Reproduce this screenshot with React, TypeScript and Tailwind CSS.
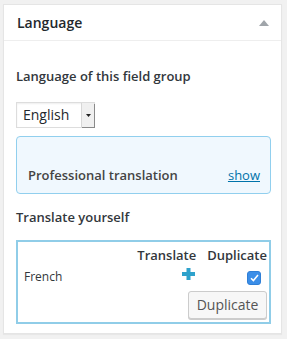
export default function App() {
  return (
    <div
      className="w-[287px] h-[339px] bg-[#f1f1f1] pt-[4px] pl-[3px]"
      style={{ fontFamily: '"Open Sans", "Noto Sans", sans-serif' }}
    >
      <div className="w-[279px] h-[330px] bg-white border border-[#e5e5e5] shadow-[0_1px_1px_rgba(0,0,0,0.04)]">
        {/* header */}
        <div className="h-[36px] flex items-center justify-between pl-[13px] pr-[12px] border-b border-[#eeeeee]">
          <h2 className="text-[14px] font-semibold text-[#23282d] leading-none pt-[1px]">Language</h2>
          <svg width="10" height="6" viewBox="0 0 10 6" className="mt-[1px]">
            <path d="M0 6 L5 0 L10 6 Z" fill="#a0a5aa" />
          </svg>
        </div>

        <div className="pl-[12px] pr-[10px]">
          <p className="mt-[26px] text-[13px] font-semibold text-[#32373c] leading-[18px]">
            Language of this field group
          </p>

          {/* select */}
          <div className="mt-[17px] flex w-[79px] h-[26px] border border-[#dddddd] bg-white shadow-[inset_0_1px_2px_rgba(0,0,0,0.07)]">
            <span className="flex-1 pl-[6px] text-[14px] text-[#23282d] leading-[24px]">English</span>
            <span className="w-[13px] h-[24px] flex items-center justify-center bg-[#f0f0f0] border-l border-[#d7d7d7] shadow-[1px_1px_0_#8a8a8a]">
              <svg width="5" height="3" viewBox="0 0 5 3">
                <path d="M0 0 L5 0 L2.5 3 Z" fill="#222" />
              </svg>
            </span>
          </div>

          {/* professional translation */}
          <div className="mt-[8px] w-[255px] h-[58px] rounded-[4px] border border-[#91cfee] bg-[#f0f8fe] flex items-end justify-between pl-[11px] pr-[10px] pb-[9px]">
            <span className="text-[13px] font-semibold text-[#444444] leading-[18px]">Professional translation</span>
            <a href="#" className="text-[13px] text-[#0073aa] underline leading-[18px]">show</a>
          </div>

          <p className="mt-[14px] text-[13px] font-semibold text-[#32373c] leading-[18px]">Translate yourself</p>

          {/* translate table */}
          <div className="mt-[14px] w-[255px] h-[84px] border-2 border-[#90cde8] pl-[6px] pr-[2px] pt-[4px]">
            <div className="flex justify-end gap-[11px] text-[13px] font-semibold text-[#32373c] leading-[18px]">
              <span>Translate</span>
              <span>Duplicate</span>
            </div>
            <div className="flex items-center h-[20px] mt-[3px]">
              <span className="flex-1 text-[12px] text-[#32373c]">French</span>
              <svg width="13" height="12" viewBox="0 0 13 12" className="mr-[52px] -mt-[6px]">
                <path d="M4.5 0 H8.5 V4 H13 V8 H8.5 V12 H4.5 V8 H0 V4 H4.5 Z" fill="#2ea2cc" />
              </svg>
              <span className="w-[14px] h-[14px] mr-[6px] mt-[2px] rounded-[3px] bg-[#3b8ee8] border border-[#2f7fd6] flex items-center justify-center">
                <svg width="9" height="8" viewBox="0 0 9 8">
                  <path d="M1 4.2 L3.4 6.6 L8 1" stroke="#fff" strokeWidth="1.5" fill="none" />
                </svg>
              </span>
            </div>
            <div className="flex justify-end mt-[4px]">
              <button className="h-[28px] w-[79px] rounded-[3px] border border-[#cccccc] bg-[#f7f7f7] shadow-[0_1px_0_#cccccc] text-[14px] text-[#555555] leading-none">
                Duplicate
              </button>
            </div>
          </div>
        </div>
      </div>
    </div>
  );
}
